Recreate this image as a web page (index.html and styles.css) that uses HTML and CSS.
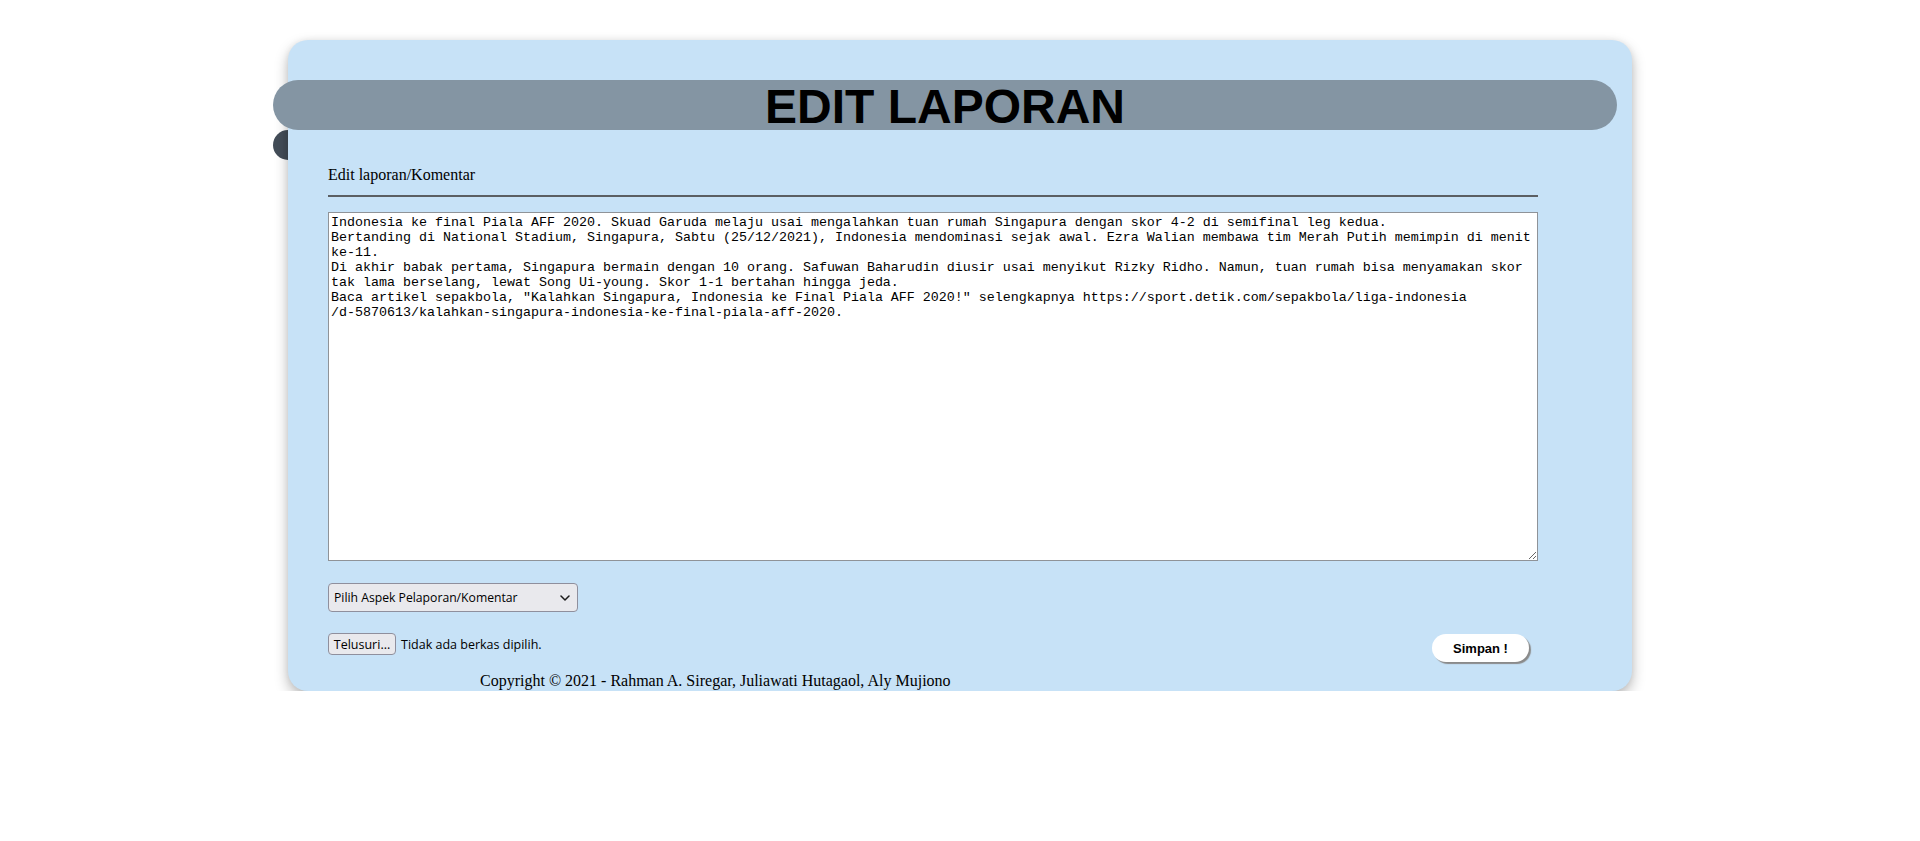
FILE: index.html
```html
<!DOCTYPE html>
<html lang="id">
<head>
<meta charset="utf-8">
<title>Edit Laporan</title>
<link rel="stylesheet" href="styles.css">
</head>
<body>
<div class="card">
  <div class="band"><h1 class="title">EDIT LAPORAN</h1></div>
  <form class="content">
    <div class="label">Edit laporan/Komentar</div>
    <textarea class="report">Indonesia ke final Piala AFF 2020. Skuad Garuda melaju usai mengalahkan tuan rumah Singapura dengan skor 4-2 di semifinal leg kedua.
Bertanding di National Stadium, Singapura, Sabtu (25/12/2021), Indonesia mendominasi sejak awal. Ezra Walian membawa tim Merah Putih memimpin di menit ke-11.
Di akhir babak pertama, Singapura bermain dengan 10 orang. Safuwan Baharudin diusir usai menyikut Rizky Ridho. Namun, tuan rumah bisa menyamakan skor tak lama berselang, lewat Song Ui-young. Skor 1-1 bertahan hingga jeda.
Baca artikel sepakbola, "Kalahkan Singapura, Indonesia ke Final Piala AFF 2020!" selengkapnya https://sport.detik.com/sepakbola/liga-indonesia
/d-5870613/kalahkan-singapura-indonesia-ke-final-piala-aff-2020.</textarea>
    <div class="select-wrap">
      <select class="aspect">
        <option>Pilih Aspek Pelaporan/Komentar</option>
      </select>
      <svg class="chev" width="10" height="6" viewBox="0 0 10 6"><path d="M1 1l4 4 4-4" fill="none" stroke="#1a1a1a" stroke-width="1.5" stroke-linecap="round" stroke-linejoin="round"/></svg>
    </div>
    <div class="actions">
      <div class="file">
        <button type="button" class="browse">Telusuri...</button>
        <span class="file-name">Tidak ada berkas dipilih.</span>
      </div>
      <button type="button" class="save">Simpan !</button>
    </div>
  </form>
  <div class="copyright">Copyright © 2021 - Rahman A. Siregar, Juliawati Hutagaol, Aly Mujiono</div>
</div>
</body>
</html>
```

FILE: styles.css
```css
html {
  margin: 0;
  padding: 0;
  background: #ffffff;
}

body {
  margin: 0;
  padding: 0;
  font-family: "Liberation Serif", "Times New Roman", serif;
  font-size: 16px;
  color: #000;
}

.card {
  position: relative;
  width: 1344px;
  margin: 40px auto 0;
  padding-top: 40px;
  box-sizing: border-box;
  height: 651px;
  background: #c7e2f7;
  border-radius: 20px;
  box-shadow: 0 6px 14px rgba(0, 0, 0, 0.28), 0 0 6px rgba(0, 0, 0, 0.06);
}

/* dark fold of the ribbon, tucked behind the card */
.card::after {
  content: "";
  position: absolute;
  left: -15px;
  top: 90px;
  width: 30px;
  height: 30px;
  border-radius: 50%;
  background: #434d58;
  z-index: -1;
}

.band {
  margin-left: -15px;
  width: 1344px;
  height: 50px;
  background: #8495a3;
  border-radius: 25px;
  display: flex;
  align-items: center;
  justify-content: center;
}

.title {
  margin: 0;
  font-family: "Liberation Sans", Arial, sans-serif;
  font-weight: bold;
  font-size: 48px;
  line-height: 50px;
  padding-top: 4px;
}

.content {
  width: 1210px;
  margin-left: 40px;
  padding-top: 36px;
  display: flex;
  flex-direction: column;
}

.label {
  font-size: 16px;
  line-height: 18px;
  padding-bottom: 11px;
  border-bottom: 2px solid #5b5f63;
}

.report {
  display: block;
  box-sizing: border-box;
  width: 1210px;
  height: 349px;
  margin-top: 15px;
  padding: 2px;
  border: 1px solid #8f9398;
  background: #fff;
  font-family: "Liberation Mono", "Courier New", monospace;
  font-size: 13.333px;
  line-height: 15px;
  color: #000;
  resize: both;
}

.select-wrap {
  position: relative;
  width: 250px;
  height: 29px;
  margin-top: 22px;
}

.aspect {
  appearance: none;
  -webkit-appearance: none;
  width: 250px;
  height: 29px;
  box-sizing: border-box;
  border: 1px solid #8f8f9d;
  border-radius: 4px;
  background: #e9e9ed;
  padding: 0 5px;
  font-family: "Open Sans", "Noto Sans", sans-serif;
  font-size: 12.2px;
  color: #000;
}

.chev {
  position: absolute;
  right: 8px;
  top: 12px;
  pointer-events: none;
}

.actions {
  display: flex;
  justify-content: space-between;
  align-items: flex-start;
  margin-top: 21px;
  padding-right: 9px;
}

.file {
  display: flex;
  align-items: center;
  gap: 5px;
  font-family: "Open Sans", "Noto Sans", sans-serif;
  font-size: 12.5px;
}

.browse {
  box-sizing: border-box;
  height: 22px;
  width: 68px;
  padding: 0;
  border: 1px solid #8f8f9d;
  border-radius: 4px;
  background: #e9e9ed;
  font-family: "Open Sans", "Noto Sans", sans-serif;
  font-size: 12.5px;
  color: #000;
}

.save {
  margin-top: 1px;
  box-sizing: border-box;
  width: 97px;
  height: 28px;
  border: none;
  border-radius: 14px;
  background: #fff;
  box-shadow: 2px 2px 1px #8a8a8a;
  font-family: "Liberation Sans", Arial, sans-serif;
  font-weight: bold;
  font-size: 13px;
  color: #000;
}

.copyright {
  margin-top: 10px;
  padding-left: 192px;
  font-size: 16px;
  line-height: 18px;
}
```
